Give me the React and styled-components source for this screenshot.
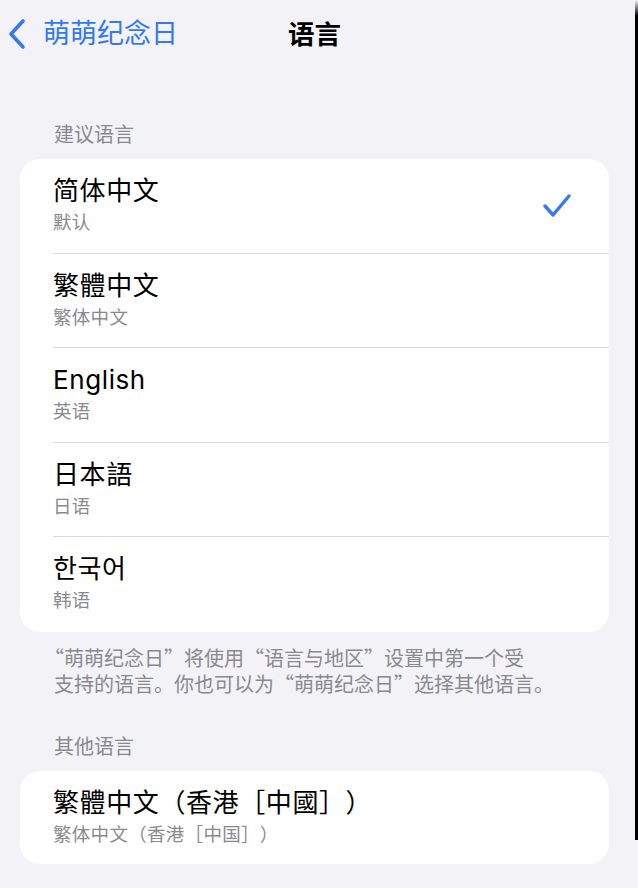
import React from 'react';
import styled, { createGlobalStyle } from 'styled-components';

const GlobalStyle = createGlobalStyle`
  body {
    margin: 0;
    background: #f2f2f7;
    font-family: Inter, "Noto Sans CJK SC", "Noto Sans CJK KR", sans-serif;
    -webkit-font-smoothing: antialiased;
  }
`;

const Page = styled.div`
  display: flex;
  width: 638px;
  height: 888px;
  overflow: hidden;
  background: #f2f2f7;
`;

const Main = styled.div`
  flex: 1;
  padding: 0 26px 0 20px;
`;

const EdgeStrip = styled.div`
  width: 3px;
  height: 840px;
  background: linear-gradient(to bottom, #f2f2f7 0, #000 16px);
`;

const NavBar = styled.div`
  display: grid;
  grid-template-columns: 1fr auto 1fr;
  align-items: center;
  height: 40px;
  padding-top: 14px;
  margin: 0 0 0 -12px;
`;

const BackButton = styled.div`
  display: flex;
  align-items: center;
  gap: 17px;
  color: #3478f6;
  font-size: 27px;
  line-height: 40px;
`;

const NavTitle = styled.div`
  font-size: 26.5px;
  font-weight: 700;
  color: #000;
  line-height: 40px;
  margin-left: 12px;
`;

const SectionHeader = styled.div`
  margin-top: ${(p) => p.top}px;
  margin-bottom: 12px;
  padding-left: 34px;
  font-size: 20px;
  line-height: 24px;
  color: #8a8a8e;
`;

const Card = styled.div`
  background: #fff;
  border-radius: 20px;
  overflow: hidden;
`;

const Row = styled.div`
  display: flex;
  height: ${(p) => p.h}px;
  padding-left: 33px;
  &:last-child > div {
    border-bottom: none;
  }
`;

const RowBody = styled.div`
  flex: 1;
  display: flex;
  align-items: flex-start;
  justify-content: space-between;
  border-bottom: 1px solid #dcdce0;
`;

const Labels = styled.div`
  padding-top: 15px;
  text-spacing-trim: space-all;
`;

const Title = styled.div`
  font-size: 26px;
  line-height: 34px;
  color: #000;
  letter-spacing: 0.6px;
`;

const Subtitle = styled.div`
  margin-top: 1px;
  font-size: 18.5px;
  line-height: 26px;
  color: #8a8a8e;
  letter-spacing: 0.3px;
`;

const Check = styled.svg`
  align-self: center;
  margin-right: 38px;
  width: 28px;
  height: 28px;
`;

const Footer = styled.div`
  margin-top: 13px;
  padding-left: 34px;
  font-family: "Noto Sans CJK SC", sans-serif;
  font-size: 20px;
  line-height: 26.5px;
  color: #8a8a8e;
  text-spacing-trim: space-all;
  text-indent: -10px;
`;

const languages = [
  { title: '简体中文', sub: '默认', checked: true },
  { title: '繁體中文', sub: '繁体中文' },
  { title: 'English', sub: '英语' },
  { title: '日本語', sub: '日语' },
  { title: '한국어', sub: '韩语' },
];

function LanguageRow({ title, sub, checked, h }) {
  return (
    <Row h={h}>
      <RowBody>
        <Labels>
          <Title>{title}</Title>
          <Subtitle>{sub}</Subtitle>
        </Labels>
        {checked && (
          <Check viewBox="0 0 28 28">
            <polyline
              points="2,14 10,23 26,4"
              fill="none"
              stroke="#3478f6"
              strokeWidth="3.4"
              strokeLinecap="round"
              strokeLinejoin="round"
            />
          </Check>
        )}
      </RowBody>
    </Row>
  );
}

export default function App() {
  return (
    <Page>
      <GlobalStyle />
      <Main>
        <NavBar>
          <BackButton>
            <svg width="18" height="32" viewBox="0 0 18 32">
              <polyline
                points="15,3 3,16 15,29"
                fill="none"
                stroke="#3478f6"
                strokeWidth="3.6"
                strokeLinecap="round"
                strokeLinejoin="round"
              />
            </svg>
            萌萌纪念日
          </BackButton>
          <NavTitle>语言</NavTitle>
          <div />
        </NavBar>

        <SectionHeader top={69}>建议语言</SectionHeader>
        <Card>
          {languages.map((l) => (
            <LanguageRow key={l.title} {...l} h={94.5} />
          ))}
        </Card>
        <Footer>
          “萌萌纪念日”将使用“语言与地区”设置中第一个受
          <br />
          支持的语言。你也可以为“萌萌纪念日”选择其他语言。
        </Footer>

        <SectionHeader top={37}>其他语言</SectionHeader>
        <Card>
          <LanguageRow title="繁體中文（香港［中國］）" sub="繁体中文（香港［中国］）" h={93} />
        </Card>
      </Main>
      <EdgeStrip />
    </Page>
  );
}
